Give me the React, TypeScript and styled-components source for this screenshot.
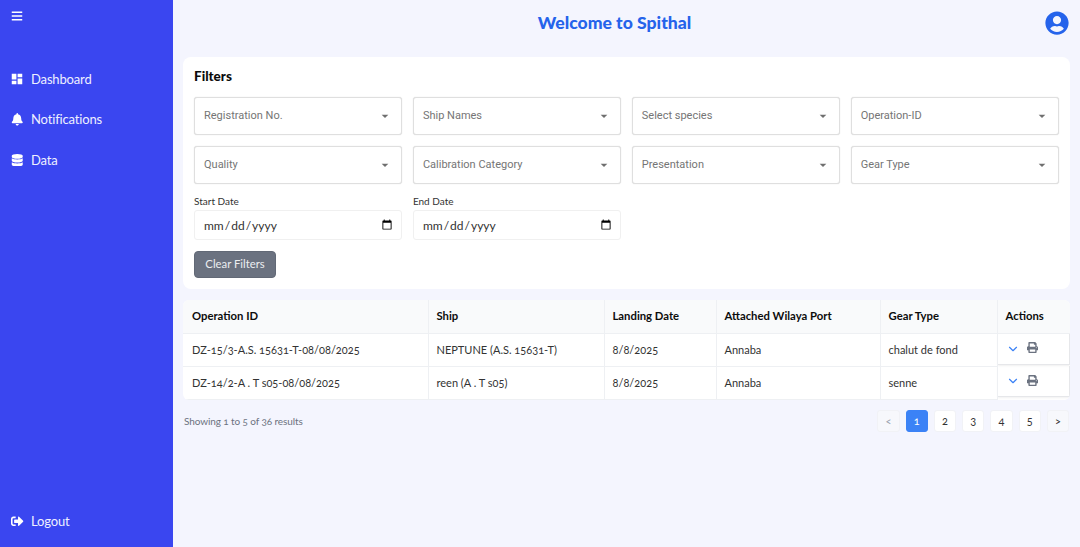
import React from "react";
import styled, { createGlobalStyle } from "styled-components";
import { FaBars, FaBell, FaDatabase, FaSignOutAlt, FaUserCircle, FaPrint } from "react-icons/fa";
import { MdDashboard } from "react-icons/md";
import { LuChevronDown } from "react-icons/lu";

const uiFont = `Lato, "Open Sans", sans-serif`;

const Global = createGlobalStyle`
  html, body { margin: 0; padding: 0; height: 100%; }
  body { font-family: ${uiFont}; background: #f4f5fe; font-variant-numeric: oldstyle-nums; }
  * { box-sizing: border-box; }
`;

const Shell = styled.div`
  display: flex;
  width: 1080px;
  height: 547px;
  overflow: hidden;
  background: #f4f5fe;
`;

const Sidebar = styled.aside`
  width: 173px;
  flex: none;
  height: 547px;
  background: #3a46f0;
  color: #fff;
  display: flex;
  flex-direction: column;
  padding: 10px 0 0 11px;
`;

const MenuToggle = styled.div`
  height: 12px;
  display: flex;
  font-size: 12px;
  margin-bottom: 44.5px;
`;

const NavList = styled.nav`
  display: flex;
  flex-direction: column;
  gap: 16px;
  flex: 1;
`;

const NavItem = styled.div`
  display: flex;
  align-items: center;
  height: 24.5px;
  font-size: 13px;
  letter-spacing: -0.15px;
  color: #eef0ff;
`;

const NavIcon = styled.span<{ $size?: number; $shift?: number }>`
  width: 20px;
  display: flex;
  align-items: center;
  font-size: ${(p) => p.$size ?? 12.5}px;
  margin-left: ${(p) => p.$shift ?? 0}px;
  margin-right: ${(p) => -(p.$shift ?? 0)}px;
  color: #fff;
`;

const LogoutRow = styled(NavItem)`
  margin-bottom: 14px;
`;

const Main = styled.main`
  flex: 1;
  min-width: 0;
  padding: 0 10px 0 10px;
`;

const Header = styled.header`
  position: relative;
  height: 57px;
  padding: 0 24px 12px 0;
  display: flex;
  align-items: center;
  justify-content: center;
`;

const Title = styled.h1`
  margin: 0;
  font-size: 17.6px;
  font-weight: 900;
  color: #2563eb;
  font-family: ${uiFont};
`;

const Avatar = styled.span`
  position: absolute;
  right: 1px;
  top: 11px;
  font-size: 24px;
  line-height: 0;
  color: #2563eb;
`;

const Card = styled.section`
  height: 232px;
  background: #fff;
  border-radius: 8px;
  padding: 11px 11px 11px;
`;

const CardTitle = styled.h2`
  margin: 0 0 12px;
  font-size: 13.5px;
  line-height: 17px;
  font-weight: 900;
  color: #0b0b0b;
  font-family: ${uiFont};
`;

const FilterGrid = styled.div`
  display: grid;
  grid-template-columns: repeat(4, 208px);
  column-gap: 10.9px;
  row-gap: 11px;
`;

const SelectBox = styled.div`
  height: 38px;
  border: 1px solid #dfdfdf;
  box-shadow: 0 0 1px #cfcfcf;
  border-radius: 3px;
  display: flex;
  align-items: center;
  justify-content: space-between;
  padding: 0 8px 1px 9px;
  font-family: Roboto, "Liberation Sans", sans-serif;
  font-size: 11px;
  color: #757575;
  background: #fff;
`;

const Caret = styled.svg`
  width: 16px;
  height: 16px;
  fill: #6f6f6f;
`;

const DateRow = styled.div`
  display: grid;
  grid-template-columns: repeat(4, 208px);
  column-gap: 10.9px;
  margin-top: 10px;
`;

const DateField = styled.label`
  display: flex;
  flex-direction: column;
  font-size: 10px;
  color: #333;
  line-height: 15px;
`;

const DateInput = styled.input`
  margin-top: 1px;
  height: 30px;
  width: 208px;
  border: 1px solid #f0f0f0;
  border-radius: 3px;
  padding: 0 6px 0 8px;
  font-family: ${uiFont};
  font-size: 12px;
  color: #333;
  background: #fff;
  outline: none;
`;

const ClearButton = styled.button`
  display: block;
  margin-top: 11px;
  width: 82px;
  height: 27px;
  border: 1px solid #626976;
  border-radius: 4px;
  background: #6b7280;
  color: #eceef1;
  font-family: ${uiFont};
  font-size: 11.3px;
  padding: 0 0 2px;
`;

const TableWrap = styled.div`
  margin-top: 11px;
  background: #fff;
  border-radius: 6px;
  overflow: hidden;
`;

const Table = styled.table`
  width: 887px;
  table-layout: fixed;
  border-collapse: collapse;
  font-size: 11px;
  color: #333;
`;

const HeadRow = styled.tr`
  height: 33px;
  background: #f9fafb;
`;

const Th = styled.th<{ $w: number }>`
  width: ${(p) => p.$w}px;
  padding: 0 8px 1px;
  text-align: left;
  font-size: 11.3px;
  font-weight: 700;
  color: #0c0c0c;
  border-right: 1px solid #eef0f3;
  border-bottom: 1px solid #eef0f3;
  &:first-child { padding-left: 9px; }
  &:last-child { border-right: 0; }
`;

const Row = styled.tr`
  height: 33px;
`;

const Td = styled.td`
  padding: 0 8px 1px;
  border-right: 1px solid #eef0f3;
  border-bottom: 1px solid #eef0f3;
  white-space: nowrap;
  &:first-child { padding-left: 9px; }
`;

const ActionCell = styled.td`
  padding: 0;
  vertical-align: top;
`;

const ActionInner = styled.div`
  height: 31px;
  display: flex;
  align-items: center;
  gap: 7px;
  padding: 0 0 0 8px;
  border-bottom: 1px solid #e6e7ea;
  border-right: 1px solid #e6e7ea;
  box-shadow: 0 1px 2px rgba(0,0,0,.06);
`;

const ExpandIcon = styled(LuChevronDown)`
  color: #3b82f6;
  font-size: 14px;
`;

const PrintIcon = styled(FaPrint)`
  color: #6b7280;
  font-size: 11px;
  margin-top: -2px;
`;

const FooterRow = styled.div`
  margin-top: 10px;
  display: flex;
  align-items: center;
  justify-content: space-between;
`;

const Showing = styled.span`
  font-size: 10px;
  letter-spacing: -0.1px;
  color: #6b7280;
  margin-left: 1px;
`;

const Pager = styled.div`
  display: flex;
  gap: 6px;
  margin-right: 1px;
`;

const PageButton = styled.button<{ $active?: boolean; $muted?: boolean; $dark?: boolean }>`
  width: 22.25px;
  height: 22px;
  padding: 0;
  border: 1px solid ${(p) => (p.$active ? "#3b82f6" : "#f1f2f6")};
  border-radius: 3px;
  font-family: ${uiFont};
  font-size: 11px;
  font-variant-numeric: oldstyle-nums;
  background: ${(p) => (p.$active ? "#3b82f6" : p.$muted ? "#f7f8fc" : "#fff")};
  color: ${(p) => (p.$active ? "#fff" : p.$muted && !p.$dark ? "#9ca3af" : "#333")};
`;

const selects = [
  "Registration No.", "Ship Names", "Select species", "Operation-ID",
  "Quality", "Calibration Category", "Presentation", "Gear Type",
];

const columns = [
  { label: "Operation ID", w: 245 },
  { label: "Ship", w: 176 },
  { label: "Landing Date", w: 112 },
  { label: "Attached Wilaya Port", w: 164 },
  { label: "Gear Type", w: 117 },
  { label: "Actions", w: 73 },
];

const rows = [
  ["DZ-15/3-A.S. 15631-T-08/08/2025", "NEPTUNE (A.S. 15631-T)", "8/8/2025", "Annaba", "chalut de fond"],
  ["DZ-14/2-A . T s05-08/08/2025", "reen (A . T s05)", "8/8/2025", "Annaba", "senne"],
];

const navItems = [
  { label: "Dashboard", icon: <MdDashboard />, size: 14, shift: -1 },
  { label: "Notifications", icon: <FaBell />, size: 12.5, shift: 0 },
  { label: "Data", icon: <FaDatabase />, size: 12.5, shift: 0 },
];

export default function App() {
  return (
    <>
      <Global />
      <Shell>
        <Sidebar>
          <MenuToggle><FaBars /></MenuToggle>
          <NavList>
            {navItems.map((n) => (
              <NavItem key={n.label}><NavIcon $size={n.size} $shift={n.shift}>{n.icon}</NavIcon>{n.label}</NavItem>
            ))}
          </NavList>
          <LogoutRow><NavIcon><FaSignOutAlt /></NavIcon>Logout</LogoutRow>
        </Sidebar>
        <Main>
          <Header>
            <Title>Welcome to Spithal</Title>
            <Avatar><FaUserCircle /></Avatar>
          </Header>
          <Card>
            <CardTitle>Filters</CardTitle>
            <FilterGrid>
              {selects.map((s) => (
                <SelectBox key={s}>
                  {s}
                  <Caret viewBox="0 0 24 24"><path d="M7 10l5 5 5-5z" /></Caret>
                </SelectBox>
              ))}
            </FilterGrid>
            <DateRow>
              <DateField>Start Date<DateInput type="date" /></DateField>
              <DateField>End Date<DateInput type="date" /></DateField>
            </DateRow>
            <ClearButton>Clear Filters</ClearButton>
          </Card>
          <TableWrap>
            <Table>
              <thead>
                <HeadRow>
                  {columns.map((c) => <Th key={c.label} $w={c.w}>{c.label}</Th>)}
                </HeadRow>
              </thead>
              <tbody>
                {rows.map((r) => (
                  <Row key={r[0]}>
                    {r.map((v, i) => <Td key={i}>{v}</Td>)}
                    <ActionCell>
                      <ActionInner><ExpandIcon /><PrintIcon /></ActionInner>
                    </ActionCell>
                  </Row>
                ))}
              </tbody>
            </Table>
          </TableWrap>
          <FooterRow>
            <Showing>Showing 1 to 5 of 36 results</Showing>
            <Pager>
              <PageButton $muted>&lt;</PageButton>
              <PageButton $active>1</PageButton>
              <PageButton>2</PageButton>
              <PageButton>3</PageButton>
              <PageButton>4</PageButton>
              <PageButton>5</PageButton>
              <PageButton $muted $dark>&gt;</PageButton>
            </Pager>
          </FooterRow>
        </Main>
      </Shell>
    </>
  );
}
